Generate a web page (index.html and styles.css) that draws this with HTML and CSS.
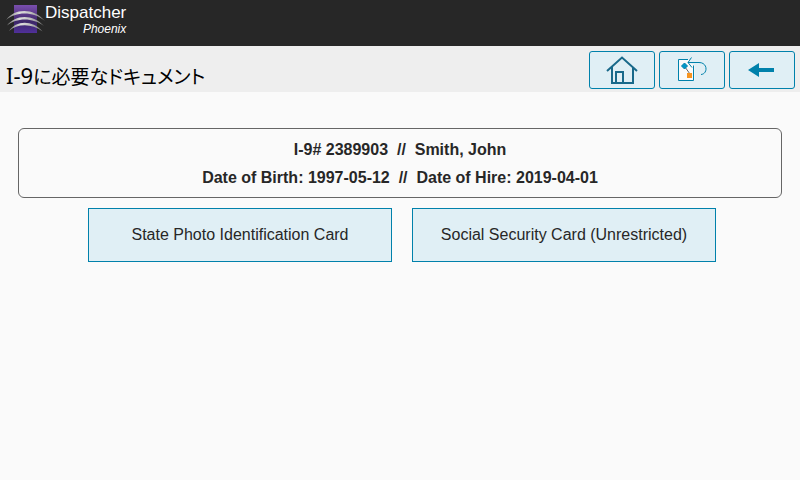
FILE: index.html
```html
<!DOCTYPE html>
<html lang="ja">
<head>
<meta charset="utf-8">
<meta name="viewport" content="width=device-width, initial-scale=1">
<title>Dispatcher Phoenix</title>
<link rel="stylesheet" href="styles.css">
</head>
<body>
<header class="brand">
  <svg class="brand-mark" width="39" height="30" viewBox="0 0 39 30" aria-hidden="true">
    <defs>
      <linearGradient id="tile" x1="0" y1="0" x2="0" y2="1">
        <stop offset="0" stop-color="#7a4fae"/>
        <stop offset="0.3" stop-color="#5d3a8c"/>
        <stop offset="0.6" stop-color="#3c2768"/>
        <stop offset="1" stop-color="#50309a"/>
      </linearGradient>
      <linearGradient id="arc" x1="0" y1="0" x2="1" y2="0">
        <stop offset="0" stop-color="#777"/>
        <stop offset="0.35" stop-color="#ddd"/>
        <stop offset="0.6" stop-color="#c4c4c4"/>
        <stop offset="1" stop-color="#777"/>
      </linearGradient>
    </defs>
    <rect x="8" y="1" width="23" height="28" fill="url(#tile)"/>
    <g fill="url(#arc)">
      <path d="M0 16C8 4.500 27 3 39 17C27 7 10 7.500 0 16Z"/>
      <path d="M1 21.500C9 10.500 27 9.500 38 22C27 13 10 13.500 1 21.500Z"/>
      <path d="M3 27C10 16.500 26 15.500 36.500 27.500C26 19 11 19.500 3 27Z"/>
    </g>
  </svg>
  <div class="brand-name">
    <span class="brand-first">Dispatcher</span>
    <span class="brand-second">Phoenix</span>
  </div>
</header>
<div class="toolbar">
  <h1 class="title"><span class="form-code">I-9</span>に必要なドキュメント</h1>
  <nav class="actions">
    <button class="action" type="button" aria-label="Home">
      <svg width="32" height="28" viewBox="0 0 32 28" fill="none" stroke="#19698a" stroke-width="2">
        <path d="M1 15L16 1.500L31 15"/>
        <path d="M6 11V27H27V11"/>
        <path d="M10 27V16H17V27"/>
      </svg>
    </button>
    <button class="action" type="button" aria-label="Return to workflow">
      <svg width="30" height="26" viewBox="0 0 30 26" fill="none">
        <path d="M12 2.500H1.500V23.500H17.500V8L12 6Z" fill="#fafafa"/>
        <path d="M11 2.500H1.500V23.500H16.500V8.500" stroke="#0081ab"/>
        <path d="M8 10L13 17" stroke="#666"/>
        <path d="M7.500 6L10.500 9L7.500 12L4.500 9Z" fill="#0096c8" stroke="#0081ab"/>
        <rect x="10" y="16" width="5" height="5" fill="#f7931e"/>
        <path d="M14.500 0.500L11 5.500L15 10.500M11 5.500H22C31 5.500 31 17 24 17.500" stroke="#0081ab"/>
      </svg>
    </button>
    <button class="action" type="button" aria-label="Back">
      <svg width="28" height="14" viewBox="0 0 28 14">
        <path d="M0 7L11 0V5H26V9H11V14Z" fill="#0081ab"/>
      </svg>
    </button>
  </nav>
</div>
<main class="content">
  <section class="summary">
    <p class="line">I-9# 2389903 &nbsp;//&nbsp; Smith, John</p>
    <p class="line">Date of Birth: 1997-05-12 &nbsp;//&nbsp; Date of Hire: 2019-04-01</p>
  </section>
  <div class="documents">
    <button class="document" type="button">State Photo Identification Card</button>
    <button class="document" type="button">Social Security Card (Unrestricted)</button>
  </div>
</main>
</body>
</html>
```
FILE: styles.css
```css
* {
  box-sizing: border-box;
}

body {
  margin: 0;
  background: #fafafa;
  color: #272727;
  font-family: "Liberation Sans", Arial, sans-serif;
  font-size: 16px;
}

.brand {
  display: flex;
  align-items: flex-start;
  height: 46px;
  padding: 4px 6px;
  background: #272727;
}

.brand-name {
  display: flex;
  flex-direction: column;
  align-items: flex-end;
  color: #fff;
}

.brand-first {
  font-size: 17px;
  line-height: 17px;
}

.brand-second {
  font-size: 12px;
  line-height: 16px;
  font-style: italic;
}

.toolbar {
  display: flex;
  align-items: center;
  justify-content: space-between;
  height: 46px;
  padding: 2px 5px 0 6px;
  background: #eee;
}

.title {
  margin: 0;
  padding-top: 12px;
  color: #000;
  font-family: "Noto Sans", "Noto Sans CJK JP", sans-serif;
  font-size: 19px;
  font-weight: 400;
  line-height: 28px;
  font-feature-settings: "palt";
}

.form-code {
  font-size: 22px;
}

.actions {
  display: flex;
  gap: 4px;
}

.action {
  display: flex;
  align-items: center;
  justify-content: center;
  width: 66px;
  height: 38px;
  padding: 0;
  border: 1px solid #0081ab;
  border-radius: 3px;
  background: #e0eff5;
}

.content {
  padding: 36px 18px;
}

.summary {
  padding: 7px 16px 5px;
  border: 1px solid #666;
  border-radius: 6px;
  text-align: center;
}

.line {
  margin: 0;
  font-weight: 700;
  line-height: 28px;
}

.documents {
  display: flex;
  justify-content: center;
  gap: 20px;
  padding: 10px 0 0 4px;
}

.document {
  width: 304px;
  height: 54px;
  border: 1px solid #0081ab;
  background: #e0eff5;
  color: #272727;
  font-family: inherit;
  font-size: 16px;
}
```
